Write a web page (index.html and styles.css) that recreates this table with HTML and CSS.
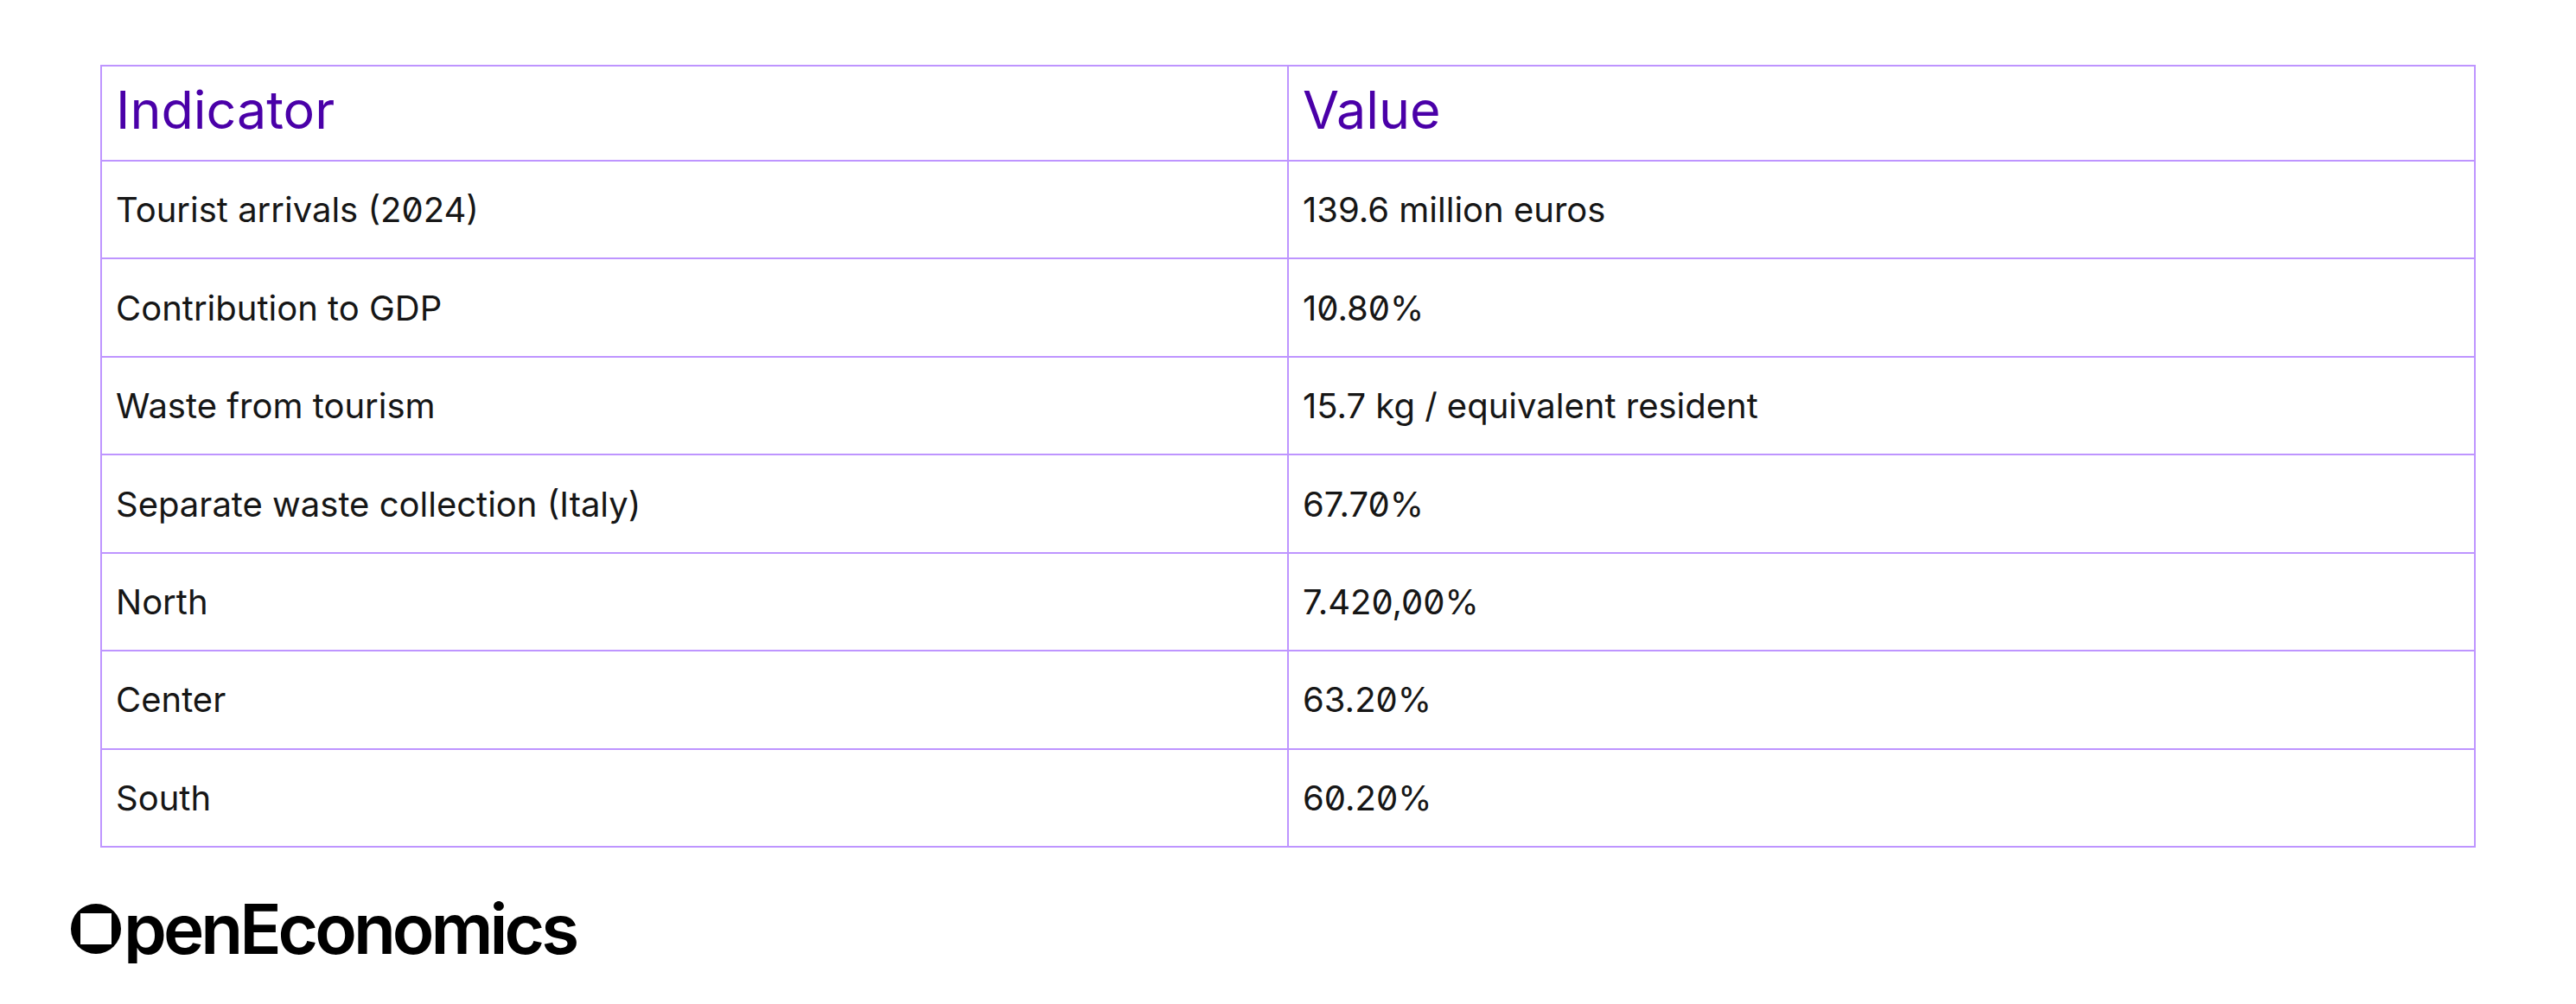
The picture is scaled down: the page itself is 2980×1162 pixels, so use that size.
FILE: index.html
```html
<!DOCTYPE html>
<html lang="en">
<head>
<meta charset="utf-8">
<title>Tourism indicators</title>
<link rel="stylesheet" href="styles.css">
</head>
<body>
<main class="page">
  <table class="data-table">
    <thead>
      <tr class="head-row">
        <th>Indicator</th>
        <th>Value</th>
      </tr>
    </thead>
    <tbody>
      <tr><td>Tourist arrivals (2024)</td><td>139.6 million euros</td></tr>
      <tr><td>Contribution to GDP</td><td>10.80%</td></tr>
      <tr><td>Waste from tourism</td><td>15.7 kg / equivalent resident</td></tr>
      <tr><td>Separate waste collection (Italy)</td><td>67.70%</td></tr>
      <tr><td>North</td><td>7.420,00%</td></tr>
      <tr><td>Center</td><td>63.20%</td></tr>
      <tr><td>South</td><td>60.20%</td></tr>
    </tbody>
  </table>
  <div class="logo">
    <svg class="logo-mark" width="58" height="58" viewBox="0 0 58 58" aria-hidden="true">
      <circle cx="29" cy="29" r="29" fill="#000"/>
      <rect x="11" y="11" width="36" height="36" fill="#fff"/>
    </svg>
    <span class="logo-text">penEconomics</span>
  </div>
</main>
</body>
</html>
```
FILE: styles.css
```css
html, body {
  margin: 0;
  padding: 0;
  background: #ffffff;
}

.page {
  padding-top: 75px;
  font-family: "Inter", "Noto Sans", sans-serif;
  font-feature-settings: "zero" 1;
}

.data-table {
  margin-left: 116px;
  width: 2748px;
  table-layout: fixed;
  border-collapse: collapse;
  border: 2px solid #be95ff;
}

.data-table th,
.data-table td {
  border: 2px solid #be95ff;
  padding: 0 16px;
  text-align: left;
  vertical-align: middle;
}

.data-table th {
  height: 100px;
  padding-bottom: 8px;
  font-size: 61px;
  font-weight: 400;
  color: #4a00a8;
}

.data-table td {
  height: 111.45px;
  font-size: 40px;
  font-weight: 400;
  color: #161616;
}

.logo {
  margin-top: 54px;
  margin-left: 82px;
  display: flex;
  align-items: baseline;
  gap: 3px;
}

.logo-mark {
  flex: none;
}

.logo-text {
  font-family: "Inter", "Liberation Sans", sans-serif;
  font-size: 80px;
  font-weight: 600;
  line-height: 80px;
  letter-spacing: -0.05em;
  color: #000;
}
```
